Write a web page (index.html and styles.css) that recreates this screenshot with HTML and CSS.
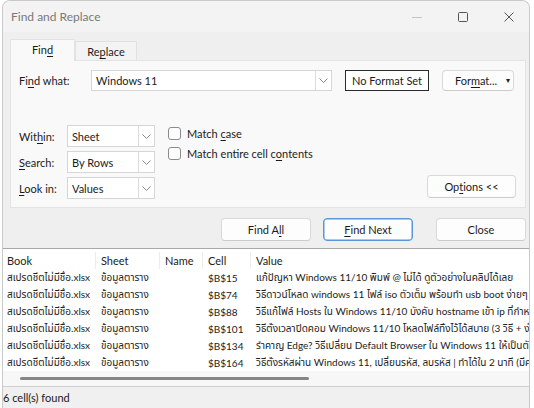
FILE: index.html
```html
<!DOCTYPE html>
<html lang="en">
<head>
    <meta charset="UTF-8">
    <meta name="viewport" content="width=device-width, initial-scale=1.0">
    <title>Find and Replace</title>
    <link rel="stylesheet" href="styles.css">
</head>
<body>
    <div class="dialog">
        <div class="title-bar">
            <span class="title">Find and Replace</span>
            <div class="window-controls">
                <svg class="ctl ctl-min" width="10" height="10" viewBox="0 0 10 10"><line x1="0" y1="5.5" x2="10" y2="5.5" stroke="#c4c4c4" stroke-width="1"/></svg>
                <svg class="ctl" width="10" height="10" viewBox="0 0 10 10"><rect x="0.5" y="0.5" width="9" height="9" rx="1" fill="none" stroke="#555" stroke-width="1"/></svg>
                <svg class="ctl" width="10" height="10" viewBox="0 0 10 10"><path d="M0.5 0.5 L9.5 9.5 M9.5 0.5 L0.5 9.5" stroke="#555" stroke-width="1"/></svg>
            </div>
        </div>

        <div class="tabs">
            <div class="tab active">Fin<u>d</u></div>
            <div class="tab">Re<u>p</u>lace</div>
        </div>

        <div class="panel">
            <div class="find-row">
                <label class="label-wide">Fi<u>n</u>d what:</label>
                <div class="combo combo-find">
                    <span class="combo-text">Windows 11</span>
                    <span class="combo-arrow"><svg width="9" height="5" viewBox="0 0 9 5"><path d="M0.5 0.5 L4.5 4.5 L8.5 0.5" fill="none" stroke="#8a8a8a"/></svg></span>
                </div>
                <div class="format-box">No Format Set</div>
                <div class="btn btn-format">For<u>m</u>at...<span class="caret">&#9662;</span></div>
            </div>

            <div class="options">
                <div class="selects">
                    <div class="select-row">
                        <label class="label-small">Wit<u>h</u>in:</label>
                        <div class="combo combo-small">
                            <span class="combo-text">Sheet</span>
                            <span class="combo-arrow"><svg width="9" height="5" viewBox="0 0 9 5"><path d="M0.5 0.5 L4.5 4.5 L8.5 0.5" fill="none" stroke="#8a8a8a"/></svg></span>
                        </div>
                    </div>
                    <div class="select-row">
                        <label class="label-small"><u>S</u>earch:</label>
                        <div class="combo combo-small">
                            <span class="combo-text">By Rows</span>
                            <span class="combo-arrow"><svg width="9" height="5" viewBox="0 0 9 5"><path d="M0.5 0.5 L4.5 4.5 L8.5 0.5" fill="none" stroke="#8a8a8a"/></svg></span>
                        </div>
                    </div>
                    <div class="select-row">
                        <label class="label-small"><u>L</u>ook in:</label>
                        <div class="combo combo-small">
                            <span class="combo-text">Values</span>
                            <span class="combo-arrow"><svg width="9" height="5" viewBox="0 0 9 5"><path d="M0.5 0.5 L4.5 4.5 L8.5 0.5" fill="none" stroke="#8a8a8a"/></svg></span>
                        </div>
                    </div>
                </div>
                <div class="checks">
                    <div class="check"><span class="box"></span>Match&nbsp;<u>c</u>ase</div>
                    <div class="check"><span class="box"></span>Match entire cell c<u>o</u>ntents</div>
                </div>
                <div class="btn btn-options">Op<u>t</u>ions &lt;&lt;</div>
            </div>
        </div>

        <div class="actions">
            <div class="btn btn-action">Find A<u>l</u>l</div>
            <div class="btn btn-action focused"><u>F</u>ind Next</div>
            <div class="btn btn-action btn-close">Close</div>
        </div>

        <div class="results">
            <div class="grid header">
                <div class="cell">Book</div>
                <div class="cell">Sheet</div>
                <div class="cell">Name</div>
                <div class="cell">Cell</div>
                <div class="cell">Value</div>
            </div>
            <div class="grid row">
                <div class="cell">สเปรดชีตไม่มีชื่อ.xlsx</div>
                <div class="cell">ข้อมูลตาราง</div>
                <div class="cell"></div>
                <div class="cell">$B$15</div>
                <div class="cell">แก้ปัญหา Windows 11/10 พิมพ์ @ ไม่ได้ ดูตัวอย่างในคลิปได้เลย</div>
            </div>
            <div class="grid row">
                <div class="cell">สเปรดชีตไม่มีชื่อ.xlsx</div>
                <div class="cell">ข้อมูลตาราง</div>
                <div class="cell"></div>
                <div class="cell">$B$74</div>
                <div class="cell">วิธีดาวน์โหลด windows 11 ไฟล์ iso ตัวเต็ม พร้อมทำ usb boot ง่ายๆ</div>
            </div>
            <div class="grid row">
                <div class="cell">สเปรดชีตไม่มีชื่อ.xlsx</div>
                <div class="cell">ข้อมูลตาราง</div>
                <div class="cell"></div>
                <div class="cell">$B$88</div>
                <div class="cell">วิธีแก้ไฟล์ Hosts ใน Windows 11/10 บังคับ hostname เข้า ip ที่กำหนด</div>
            </div>
            <div class="grid row">
                <div class="cell">สเปรดชีตไม่มีชื่อ.xlsx</div>
                <div class="cell">ข้อมูลตาราง</div>
                <div class="cell"></div>
                <div class="cell">$B$101</div>
                <div class="cell">วิธีตั้งเวลาปิดคอม Windows 11/10 โหลดไฟล์ทิ้งไว้ได้สบาย (3 วิธี + ง่ายมาก)</div>
            </div>
            <div class="grid row">
                <div class="cell">สเปรดชีตไม่มีชื่อ.xlsx</div>
                <div class="cell">ข้อมูลตาราง</div>
                <div class="cell"></div>
                <div class="cell">$B$134</div>
                <div class="cell">รำคาญ Edge? วิธีเปลี่ยน Default Browser ใน Windows 11 ให้เป็นตัวอื่น</div>
            </div>
            <div class="grid row">
                <div class="cell">สเปรดชีตไม่มีชื่อ.xlsx</div>
                <div class="cell">ข้อมูลตาราง</div>
                <div class="cell"></div>
                <div class="cell">$B$164</div>
                <div class="cell">วิธีตั้งรหัสผ่าน Windows 11, เปลี่ยนรหัส, ลบรหัส | ทำได้ใน 2 นาที (มีคลิป)</div>
            </div>
            <div class="hscroll"><span class="thumb"></span></div>
        </div>

        <div class="status">6 cell(s) found</div>
    </div>
</body>
</html>
```

FILE: styles.css
```css
body {
    margin: 0;
    background: #ffffff;
    font-family: Lato, "Noto Sans Thai", "Noto Sans", sans-serif;
    font-size: 11px;
    color: #1b1b1b;
    overflow: hidden;
}
u {
    text-decoration-thickness: 1px;
    text-underline-offset: 2px;
}
.dialog {
    box-sizing: border-box;
    width: 528px;
    height: 408px;
    margin-left: 2px;
    background: #efefef;
    border: 1px solid #c9c9c9;
    border-bottom: none;
    border-radius: 8px 8px 0 0;
    display: flex;
    flex-direction: column;
    overflow: hidden;
}
.title-bar {
    height: 31px;
    flex-shrink: 0;
    display: flex;
    align-items: center;
    padding: 0 15px 0 8px;
    background: #f3f3f3;
}
.title {
    font-size: 12px;
    color: #797979;
}
.window-controls {
    margin-left: auto;
    display: flex;
    gap: 36px;
    align-items: center;
}
.ctl { display: block; }

.tabs {
    display: flex;
    align-items: flex-end;
    padding: 6px 0 0 7px;
    height: 28px;
    box-sizing: border-box;
}
.tab {
    height: 19px;
    width: 62px;
    box-sizing: border-box;
    display: flex;
    align-items: center;
    justify-content: center;
    background: #f3f3f3;
    border: 1px solid #e1e1e1;
    border-bottom: none;
}
.tab.active {
    height: 22px;
    width: 65px;
    background: #f9f9f9;
    border-color: #e3e3e3;
    position: relative;
    top: 1px;
    padding-bottom: 2px;
}

.panel {
    box-sizing: border-box;
    height: 148px;
    margin: 0 3px 0 7px;
    background: #f9f9f9;
    border: 1px solid #e3e3e3;
    padding: 9px 9px 0 8px;
}
.find-row {
    display: flex;
    align-items: center;
    height: 21px;
}
.label-wide { width: 72px; }
.label-small { width: 48px; }
.combo {
    box-sizing: border-box;
    height: 100%;
    display: flex;
    align-items: center;
    background: #ffffff;
    border: 1px solid #d6d6d6;
}
.combo-find { width: 241px; }
.combo-small { width: 88px; }
.combo-text {
    flex: 1;
    padding-left: 4px;
}
.combo-arrow {
    width: 15px;
    height: 100%;
    border-left: 1px solid #dcdcdc;
    display: flex;
    align-items: center;
    justify-content: center;
}
.format-box {
    box-sizing: border-box;
    width: 84px;
    height: 21px;
    margin-left: 13px;
    border: 1.5px solid #2b2b2b;
    display: flex;
    align-items: center;
    justify-content: center;
    background: #ffffff;
}
.btn {
    box-sizing: border-box;
    display: flex;
    align-items: center;
    justify-content: center;
    background: #fdfdfd;
    border: 1px solid #d9d9d9;
    border-bottom-color: #cbcbcb;
    border-radius: 4px;
}
.btn-format {
    width: 72px;
    height: 21px;
    margin-left: 13px;
    position: relative;
    padding-right: 4px;
}
.caret {
    position: absolute;
    right: 3px;
    top: 4px;
    font-size: 8px;
    color: #222;
}

.options {
    display: flex;
    margin-top: 34px;
}
.selects {
    display: flex;
    flex-direction: column;
    gap: 4px;
}
.select-row {
    display: flex;
    align-items: center;
    height: 22px;
}
.checks {
    margin-left: 13px;
    display: flex;
    flex-direction: column;
    gap: 4px;
}
.check {
    display: flex;
    align-items: center;
    height: 16px;
}
.box {
    box-sizing: border-box;
    width: 13px;
    height: 13px;
    margin-right: 6px;
    border: 1px solid #8b8b8b;
    border-radius: 3px;
    background: #fdfdfd;
}
.btn-options {
    margin-left: auto;
    margin-top: 50px;
    width: 89px;
    height: 23px;
}

.actions {
    display: flex;
    justify-content: flex-end;
    padding-right: 3px;
    margin-top: 10px;
    gap: 12px;
}
.btn-action {
    width: 90px;
    height: 23px;
}
.btn-close { margin-left: 11px; }
.btn-action.focused {
    border: 1px solid #5b97d6;
    box-shadow: inset 0 0 0 0.5px #5b97d6;
}

.results {
    box-sizing: border-box;
    height: 139px;
    margin-top: 7px;
    background: #ffffff;
    border-top: 1px solid #a8a8a8;
    border-bottom: 1px solid #cfcfcf;
    padding-top: 3px;
    display: flex;
    flex-direction: column;
    overflow: hidden;
}
.grid {
    box-sizing: border-box;
    display: grid;
    grid-template-columns: 93px 64px 43px 48px 400px;
    height: 17px;
    align-items: center;
    color: #222;
}
.row { padding-top: 1px; }
.cell {
    padding-left: 5px;
    white-space: nowrap;
    overflow: hidden;
    font-size: 10px;
}
.cell:first-child { padding-left: 4px; }
.header .cell {
    border-right: 1px solid #ececec;
    height: 17px;
    line-height: 17px;
    font-size: 11px;
}
.header .cell:last-child { border-right: none; }
.hscroll {
    flex: 1;
    background: #f7f7f7;
    display: flex;
    align-items: center;
    padding-left: 17px;
}
.thumb {
    display: block;
    width: 289px;
    height: 3px;
    border-radius: 2px;
    background: #868686;
}

.status {
    flex: 1;
    display: flex;
    align-items: center;
    background: #f0f0f0;
}
```
